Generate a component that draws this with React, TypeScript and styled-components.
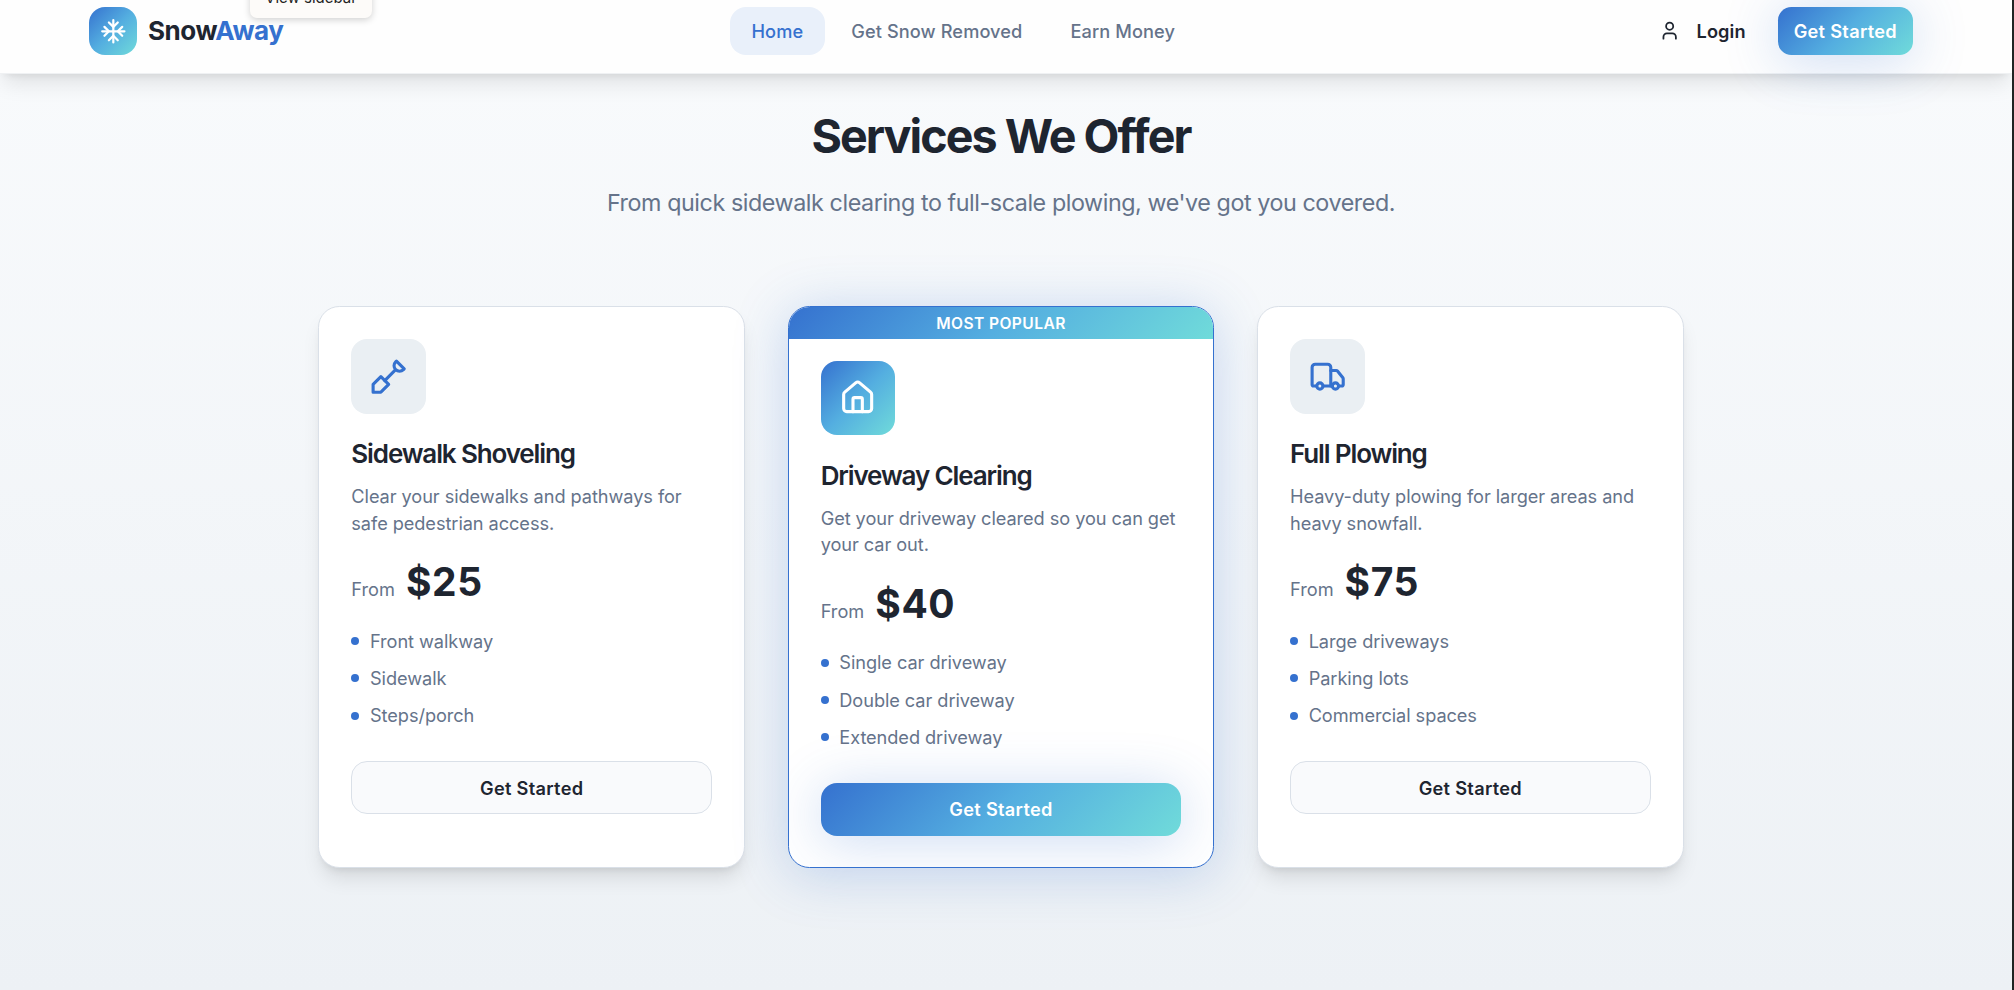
import React from "react";
import styled, { createGlobalStyle, css } from "styled-components";
import { House, Truck, User } from "lucide-react";

const NAV_ITEMS = [
  { id: "home", label: "Home", active: true },
  { id: "request", label: "Get Snow Removed", active: false },
  { id: "earn", label: "Earn Money", active: false },
];

const SnowflakeIcon = ({ size }: { size: number }) => (
  <svg width={size} height={size} viewBox="0 0 24 24" fill="none" stroke="currentColor" strokeWidth="2" strokeLinecap="round" strokeLinejoin="round">
    <path d="M2 12h20M12 2v20" />
    <path d="m20 16-4-4 4-4M4 8l4 4-4 4" />
    <path d="m16 4-4 4-4-4M8 20l4-4 4 4" />
  </svg>
);

const ShovelIcon = ({ size }: { size: number }) => (
  <svg width={size} height={size} viewBox="0 0 24 24" fill="none" stroke="currentColor" strokeWidth="2" strokeLinecap="round" strokeLinejoin="round">
    <path d="M2 22v-5l5-5 5 5-5 5z" />
    <path d="M9.5 14.5 16 8" />
    <path d="m17 2 5 5-.5.5a3.53 3.53 0 0 1-5 0 3.53 3.53 0 0 1 0-5L17 2" />
  </svg>
);

const SERVICES = [
  {
    id: "sidewalk",
    icon: <ShovelIcon size={37.33} />,
    title: "Sidewalk Shoveling",
    description: "Clear your sidewalks and pathways for safe pedestrian access.",
    price: "$25",
    features: ["Front walkway", "Sidewalk", "Steps/porch"],
    popular: false,
  },
  {
    id: "driveway",
    icon: <House size={37.33} />,
    title: "Driveway Clearing",
    description: "Get your driveway cleared so you can get your car out.",
    price: "$40",
    features: ["Single car driveway", "Double car driveway", "Extended driveway"],
    popular: true,
  },
  {
    id: "plowing",
    icon: <Truck size={37.33} />,
    title: "Full Plowing",
    description: "Heavy-duty plowing for larger areas and heavy snowfall.",
    price: "$75",
    features: ["Large driveways", "Parking lots", "Commercial spaces"],
    popular: false,
  },
];

export default function App() {
  return (
    <Page>
      <GlobalStyle />
      <Header>
        <HeaderInner>
          <Logo>
            <LogoMark>
              <SnowflakeIcon size={26.67} />
            </LogoMark>
            <LogoText>
              Snow<span>Away</span>
            </LogoText>
          </Logo>
          <Nav>
            {NAV_ITEMS.map((item) => (
              <NavLink key={item.id} $active={item.active}>
                {item.label}
              </NavLink>
            ))}
          </Nav>
          <Actions>
            <LoginButton>
              <User size={21.33} />
              Login
            </LoginButton>
            <CtaButton>Get Started</CtaButton>
          </Actions>
        </HeaderInner>
      </Header>
      <Tooltip>View sidebar</Tooltip>

      <Section>
        <Title>Services We Offer</Title>
        <Subtitle>From quick sidewalk clearing to full-scale plowing, we've got you covered.</Subtitle>
        <CardGrid>
          {SERVICES.map((service) => (
            <Card key={service.id} $popular={service.popular}>
              {service.popular && <Banner>MOST POPULAR</Banner>}
              <CardBody $popular={service.popular}>
                <IconTile $popular={service.popular}>{service.icon}</IconTile>
                <CardTitle>{service.title}</CardTitle>
                <Description>{service.description}</Description>
                <PriceRow>
                  <From>From</From>
                  <Price>{service.price}</Price>
                </PriceRow>
                <FeatureList>
                  {service.features.map((feature) => (
                    <Feature key={feature}>{feature}</Feature>
                  ))}
                </FeatureList>
                <CardButton $popular={service.popular}>Get Started</CardButton>
              </CardBody>
            </Card>
          ))}
        </CardGrid>
      </Section>
    </Page>
  );
}

// --- Styled Components ---

const GlobalStyle = createGlobalStyle`
  *, *::before, *::after {
    box-sizing: border-box;
  }

  body {
    margin: 0;
    font-family: Inter, "Liberation Sans", sans-serif;
    -webkit-font-smoothing: antialiased;
  }

  h1, h2, h3, p, ul {
    margin: 0;
    padding: 0;
  }

  button {
    font-family: inherit;
    border: none;
    cursor: pointer;
  }
`;

const frost = "linear-gradient(135deg, #3571cf 0%, #54aee0 50%, #70dbda 100%)";
const glow = "0 5.33px 53.33px rgba(51, 112, 208, 0.25)";
const shadow = "0 13.33px 20px -4px rgba(0, 0, 0, 0.1), 0 5.33px 8px -5.33px rgba(0, 0, 0, 0.1)";

const Page = styled.div`
  position: relative;
  display: flex;
  flex-direction: column;
  height: 990px;
  overflow: hidden;
  color: #1e2530;
  background: linear-gradient(180deg, #f8fafc 74px, #edf1f5 100%);
  border-right: 2px solid #202423;
`;

const Header = styled.header`
  position: relative;
  flex-shrink: 0;
  height: 85.33px;
  margin-top: -11.33px;
  padding-right: 10px;
  background: #fefefe;
  border-bottom: 1px solid #eff1f3;
  box-shadow: ${shadow};
`;

const HeaderInner = styled.div`
  display: flex;
  align-items: center;
  justify-content: space-between;
  width: 1824px;
  height: 100%;
  margin: 0 auto;
`;

const Logo = styled.div`
  display: flex;
  align-items: center;
  gap: 11px;
`;

const LogoMark = styled.div`
  display: flex;
  align-items: center;
  justify-content: center;
  width: 48px;
  height: 48px;
  border-radius: 16px;
  color: #fff;
  background: ${frost};
`;

const LogoText = styled.span`
  font-size: 26px;
  font-weight: 700;
  letter-spacing: -0.47px;

  span {
    color: #3571cf;
  }
`;

const Nav = styled.nav`
  display: flex;
  gap: 5.33px;
`;

const NavLink = styled.a<{ $active: boolean }>`
  display: flex;
  align-items: center;
  height: 48px;
  padding: 0 21.33px;
  border-radius: 16px;
  font-size: 18.2px;
  font-weight: 500;
  letter-spacing: 0.1px;
  color: ${({ $active }) => ($active ? "#3571cf" : "#65738a")};
  background: ${({ $active }) => ($active ? "#e9f0fa" : "transparent")};
`;

const Actions = styled.div`
  display: flex;
  align-items: center;
  gap: 16px;
`;

const LoginButton = styled.button`
  display: flex;
  align-items: center;
  gap: 16px;
  height: 48px;
  padding: 0 16px;
  font-size: 18.2px;
  font-weight: 600;
  letter-spacing: 0.1px;
  color: #1e2530;
  background: transparent;
`;

const CtaButton = styled.button`
  height: 48px;
  padding: 0 16px;
  border-radius: 13.33px;
  font-size: 18.2px;
  font-weight: 600;
  letter-spacing: 0.3px;
  color: #fff;
  background: ${frost};
  box-shadow: ${glow};
`;

const Tooltip = styled.div`
  position: absolute;
  top: -20px;
  left: 250px;
  width: 122px;
  height: 38px;
  padding-top: 9px;
  border-radius: 7px;
  font-size: 15px;
  line-height: 18px;
  text-align: center;
  color: #222;
  background: #fdfbf9;
  box-shadow: 0 2px 7px rgba(0, 0, 0, 0.18);
`;

const Section = styled.main`
  display: flex;
  flex-direction: column;
  align-items: center;
  padding: 32px 10px 0 0;
`;

const Title = styled.h2`
  font-size: 46.6px;
  line-height: 60px;
  font-weight: 700;
  letter-spacing: -1.97px;
`;

const Subtitle = styled.p`
  margin-top: 18px;
  font-size: 23.3px;
  line-height: 37.33px;
  letter-spacing: -0.43px;
  color: #65738a;
`;

const CardGrid = styled.div`
  display: grid;
  grid-template-columns: repeat(3, 1fr);
  gap: 42.67px;
  width: 1365.33px;
  margin-top: 84.67px;
`;

const Card = styled.article<{ $popular: boolean }>`
  border: 1px solid ${({ $popular }) => ($popular ? "#3571cf" : "#dae0e8")};
  border-radius: 21.33px;
  overflow: hidden;
  background: #fff;
  box-shadow: ${({ $popular }) => ($popular ? glow : shadow)};
`;

const Banner = styled.div`
  height: 32px;
  font-size: 15.6px;
  line-height: 33px;
  font-weight: 600;
  letter-spacing: 0.4px;
  text-align: center;
  color: #fff;
  background: ${frost};
`;

const CardBody = styled.div<{ $popular: boolean }>`
  display: flex;
  flex-direction: column;
  padding: ${({ $popular }) => ($popular ? "21.67px 32px 31px" : "32px")};
`;

const IconTile = styled.div<{ $popular: boolean }>`
  display: flex;
  align-items: center;
  justify-content: center;
  width: 74.67px;
  height: 74.67px;
  margin-bottom: 21.33px;
  border-radius: 16px;
  color: ${({ $popular }) => ($popular ? "#fff" : "#3571cf")};
  background: ${({ $popular }) => ($popular ? frost : "#eaeff3")};
`;

const CardTitle = styled.h3`
  margin-bottom: 10.67px;
  font-size: 26px;
  line-height: 37.33px;
  font-weight: 600;
  letter-spacing: -1.13px;
`;

const Description = styled.p`
  margin-bottom: 21.33px;
  font-size: 18.2px;
  line-height: 26.67px;
  letter-spacing: -0.07px;
  color: #65738a;
`;

const PriceRow = styled.div`
  display: flex;
  align-items: baseline;
  gap: 11px;
  height: 48.67px;
  padding-top: 0.67px;
  margin-bottom: 21.33px;
`;

const From = styled.span`
  font-size: 18.2px;
  color: #65738a;
`;

const Price = styled.span`
  font-size: 39px;
  line-height: 48px;
  font-weight: 700;
  letter-spacing: 0.6px;
`;

const FeatureList = styled.ul`
  display: flex;
  flex-direction: column;
  gap: 10.67px;
  margin-bottom: 32px;
  list-style: none;
`;

const Feature = styled.li`
  display: flex;
  align-items: center;
  gap: 10.67px;
  font-size: 18.2px;
  line-height: 26.67px;
  letter-spacing: -0.07px;
  color: #65738a;

  &::before {
    content: "";
    width: 8px;
    height: 8px;
    border-radius: 50%;
    background: #3571cf;
  }
`;

const CardButton = styled.button<{ $popular: boolean }>`
  height: 53.33px;
  border-radius: 16px;
  font-size: 18.2px;
  font-weight: 600;
  letter-spacing: 0.3px;

  ${({ $popular }) =>
    $popular
      ? css`
          color: #fff;
          background: ${frost};
          box-shadow: ${glow};
        `
      : css`
          color: #1e2530;
          background: #f9fafc;
          border: 1px solid #dae0e8;
        `}
`;
